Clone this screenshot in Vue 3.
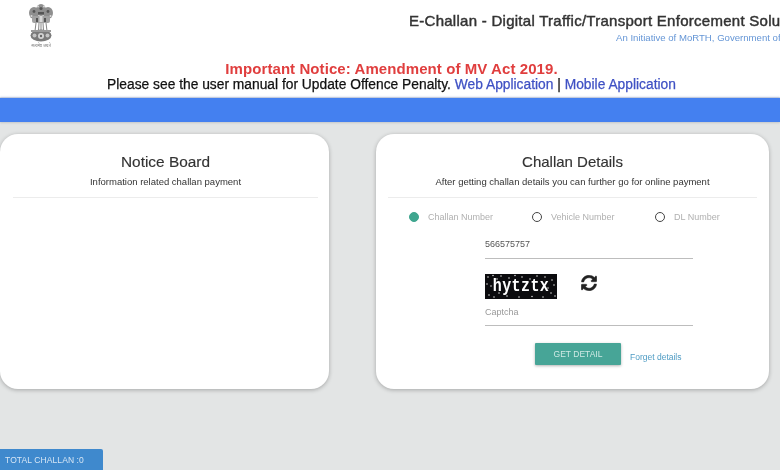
<script setup>
const radios = [
  { label: 'Challan Number', on: true },
  { label: 'Vehicle Number', on: false },
  { label: 'DL Number', on: false },
]
const specks = [
  [3, 3], [8, 1.5], [12, 5], [2, 10], [6, 12], [4, 21], [9, 23], [16, 2], [24, 4], [30, 1.5],
  [37, 3], [45, 5], [52, 2], [60, 3], [67, 6], [69, 11], [66, 19], [70, 22], [58, 23], [47, 22.5],
  [34, 23], [22, 22], [14, 19], [63, 14],
]
</script>

<template>
  <div class="page">
    <header class="top">
      <div class="brand">
        <div class="emblem">
          <svg width="26" height="40" viewBox="0 0 26 40">
            <g fill="#8f8f8f">
              <ellipse cx="13" cy="7" rx="5" ry="6" />
              <ellipse cx="6" cy="10" rx="5" ry="6" />
              <ellipse cx="20" cy="10" rx="5" ry="6" />
              <rect x="4" y="13" width="18" height="7" rx="2" fill="#a2a2a2" />
            </g>
            <g fill="#555">
              <circle cx="13" cy="5.5" r="1.6" />
              <circle cx="6" cy="8.5" r="1.4" />
              <circle cx="20" cy="8.5" r="1.4" />
              <rect x="10" y="9" width="6" height="2.5" />
              <rect x="8" y="15" width="2" height="4" />
              <rect x="16" y="15" width="2" height="4" />
            </g>
            <g fill="#d8d8d8">
              <circle cx="10" cy="3.5" r="1" />
              <circle cx="16" cy="3.5" r="1" />
              <circle cx="3.5" cy="13" r="1" />
              <circle cx="22.5" cy="13" r="1" />
              <rect x="11.5" y="13" width="3" height="6" />
            </g>
            <g stroke="#858585" stroke-width="1" fill="none">
              <path d="M8 20l-1 8M11 20l-.5 8M13 20v8M15 20l.5 8M18 20l1 8" />
            </g>
            <ellipse cx="13" cy="32.5" rx="10.5" ry="6" fill="#7a7a7a" />
            <rect x="3" y="27" width="20" height="2" fill="#9a9a9a" />
            <circle cx="13" cy="33" r="3" fill="#d4d4d4" />
            <circle cx="13" cy="33" r="1.2" fill="#666" />
            <circle cx="6.5" cy="32.5" r="2" fill="#c4c4c4" />
            <circle cx="19.5" cy="32.5" r="2" fill="#c4c4c4" />
          </svg>
          <span class="motto">सत्यमेव जयते</span>
        </div>
        <div class="titles">
          <h1>E-Challan - Digital Traffic/Transport Enforcement Solutions</h1>
          <p>An Initiative of MoRTH, Government of India</p>
        </div>
      </div>
      <div class="notice">
        <div class="important">Important Notice: Amendment of MV Act 2019.</div>
        <div class="manual">
          Please see the user manual for Update Offence Penalty.
          <a>Web Application</a> | <a>Mobile Application</a>
        </div>
      </div>
    </header>
    <div class="bar"></div>

    <main class="cards">
      <section class="card left">
        <div class="card-head">
          <h2>Notice Board</h2>
          <p>Information related challan payment</p>
        </div>
      </section>

      <section class="card right">
        <div class="card-head">
          <h2>Challan Details</h2>
          <p>After getting challan details you can further go for online payment</p>
        </div>
        <div class="radios">
          <div v-for="r in radios" :key="r.label" class="radio">
            <span class="dot" :class="{ on: r.on }"></span>
            <span class="radio-label">{{ r.label }}</span>
          </div>
        </div>
        <div class="form">
          <div class="field value">566575757</div>
          <div class="captcha-row">
            <div class="captcha">
              <svg class="specks" width="72" height="25" viewBox="0 0 72 25">
                <circle v-for="(s, i) in specks" :key="i" :cx="s[0]" :cy="s[1]" r="0.7" fill="#fff" />
              </svg>
              <span class="captcha-text">hytztx</span>
            </div>
            <svg class="refresh" width="16" height="16" viewBox="0 0 512 512">
              <path fill="#222" stroke="#222" stroke-width="14" d="M370.7 133.3C339.5 104 298.9 88 255.8 88c-77.5.1-144.3 53.2-162.8 126.9-1.3 5.4-6.1 9.2-11.7 9.2H24.1c-7.5 0-13.2-6.8-11.8-14.2C33.9 94.9 134.8 8 256 8c66.4 0 126.8 26.1 171.3 68.7L463 41c15.1-15.1 41-4.4 41 17v134c0 13.3-10.7 24-24 24H346c-21.4 0-32.1-25.9-17-41l41.7-41.7zM32 296h134c21.4 0 32.1 25.9 17 41l-41.7 41.7c31.2 29.3 71.8 45.3 114.9 45.3 77.4-.1 144.3-53.1 162.8-126.8 1.3-5.4 6.1-9.2 11.7-9.2h57.3c7.5 0 13.2 6.8 11.8 14.2C478.1 417.1 377.2 504 256 504c-66.4 0-126.8-26.1-171.3-68.7L49 471c-15.1 15.1-41 4.4-41-17V320c0-13.3 10.7-24 24-24z" />
            </svg>
          </div>
          <div class="field placeholder">Captcha</div>
          <div class="actions">
            <button class="get">GET DETAIL</button>
            <a class="forget">Forget details</a>
          </div>
        </div>
      </section>
    </main>

    <div class="total">TOTAL CHALLAN :0</div>
  </div>
</template>

<style scoped>
.page {
  position: relative;
  width: 780px;
  height: 470px;
  overflow: hidden;
  background: #e3e5e5;
  font-family: "Liberation Sans", Arial, sans-serif;
  filter: blur(0.3px);
}
.top {
  height: 97px;
  background: #fff;
  box-sizing: border-box;
  overflow: hidden;
}
.brand {
  display: flex;
  height: 58px;
}
.emblem {
  width: 26px;
  margin: 3px 0 0 28px;
  display: flex;
  flex-direction: column;
  align-items: center;
}
.emblem svg {
  flex: none;
}
.motto {
  font-family: "Noto Sans", "DejaVu Sans", sans-serif;
  font-size: 4px;
  line-height: 4px;
  white-space: nowrap;
  color: #777;
  margin-top: 1px;
}
.titles {
  margin-left: 355px;
  white-space: nowrap;
  flex: none;
}
.titles h1 {
  margin: 12px 0 0;
  font-size: 15px;
  line-height: 18px;
  font-weight: 400;
  color: #333;
  -webkit-text-stroke: 0.45px #333;
  letter-spacing: 0.27px;
}
.titles p {
  margin: 2px 0 0 207px;
  font-size: 9.6px;
  line-height: 12px;
  color: #6596d6;
}
.notice {
  text-align: center;
  white-space: nowrap;
  margin-top: 2px;
  padding-left: 3px;
}
.important {
  font-size: 15px;
  line-height: 17px;
  font-weight: 700;
  color: #e03e3e;
  letter-spacing: 0.08px;
}
.manual {
  font-size: 13.8px;
  line-height: 15px;
  color: #111;
  -webkit-text-stroke: 0.25px #111;
}
.manual a {
  color: #3f51c4;
  -webkit-text-stroke: 0.25px #3f51c4;
}
.bar {
  height: 24px;
  margin-top: 1px;
  background: #4480f0;
  box-shadow: 0 -1px 2px rgba(100, 130, 200, 0.35), 0 1px 2px rgba(0, 0, 0, 0.12);
}
.cards {
  display: flex;
  gap: 47px;
  padding: 12px 11px 0 0;
  height: 255px;
}
.card {
  background: #fff;
  border-radius: 18px;
  box-shadow: 0 1px 4px rgba(0, 0, 0, 0.28);
  height: 255px;
  box-sizing: border-box;
}
.left {
  width: 329px;
  padding: 0 11px 0 13px;
}
.right {
  width: 393px;
  padding: 0 12px;
}
.card-head {
  text-align: center;
  padding-top: 19px;
  height: 44px;
  border-bottom: 1px solid #ececec;
}
.card-head h2 {
  margin: 0;
  font-size: 15px;
  line-height: 18px;
  font-weight: 400;
  color: #333;
  -webkit-text-stroke: 0.15px #333;
}
.left .card-head h2 {
  font-size: 15.4px;
}
.card-head p {
  margin: 5px 0 0;
  font-size: 9.5px;
  line-height: 11px;
  color: #333;
}
.radios {
  display: flex;
  padding: 13px 0 0 21px;
}
.radio {
  flex: none;
  display: flex;
  align-items: center;
  height: 12px;
  width: 123px;
}
.dot {
  box-sizing: border-box;
  width: 10px;
  height: 10px;
  border-radius: 50%;
  border: 1.5px solid #444;
  margin-right: 9px;
}
.dot.on {
  background: #3fa68f;
  border-color: #3fa68f;
}
.radio-label {
  font-size: 9px;
  color: #b0b0b0;
}
.form {
  width: 208px;
  margin: 14px 0 0 97px;
}
.field {
  box-sizing: border-box;
  border-bottom: 1px solid #bdbdbd;
  font-size: 9px;
  line-height: 12px;
}
.value {
  height: 22px;
  color: #555;
  padding-top: 1px;
}
.placeholder {
  height: 27px;
  color: #999;
  padding-top: 7px;
}
.captcha-row {
  display: flex;
  margin-top: 15px;
}
.captcha {
  position: relative;
  width: 72px;
  height: 25px;
  background: #0b0b0e;
  text-align: center;
  overflow: hidden;
}
.specks {
  position: absolute;
  left: 0;
  top: 0;
}
.captcha-text {
  display: inline-block;
  color: #fff;
  font-family: "Liberation Mono", monospace;
  font-weight: 700;
  font-size: 15px;
  line-height: 25px;
  letter-spacing: 0.4px;
  transform: scaleY(1.25);
}
.refresh {
  margin: 1px 0 0 24px;
}
.actions {
  display: flex;
  align-items: center;
  margin: 17px 0 0 50px;
}
.get {
  width: 86px;
  height: 22px;
  padding: 0;
  border: none;
  border-radius: 1px;
  background: #47a597;
  color: #cfe9e4;
  font-family: inherit;
  font-size: 8.5px;
  box-shadow: 0 1px 3px rgba(0, 0, 0, 0.3);
}
.forget {
  margin: 5px 0 0 9px;
  font-size: 8.5px;
  color: #4f9cc4;
}
.total {
  position: absolute;
  left: 0;
  bottom: 0;
  width: 103px;
  height: 21px;
  box-sizing: border-box;
  padding: 6px 0 0 5px;
  background: #3f89cd;
  color: #d6e6f5;
  font-size: 8.5px;
  line-height: 11px;
  border-radius: 0 2px 0 0;
  letter-spacing: 0.1px;
}
</style>
